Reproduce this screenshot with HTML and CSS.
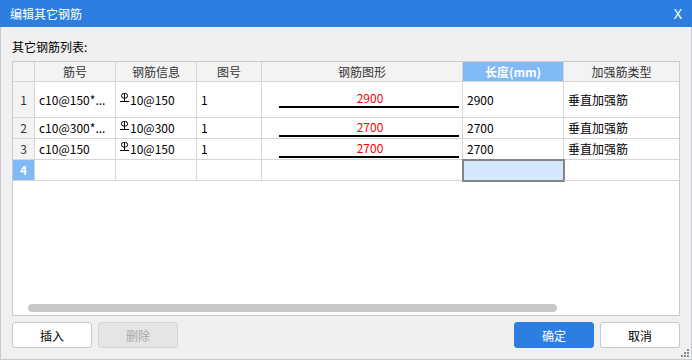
FILE: index.html
```html
<!DOCTYPE html>
<html lang="zh-CN">
<head>
    <meta charset="UTF-8">
    <title>编辑其它钢筋</title>
    <link rel="stylesheet" href="styles.css">
</head>
<body>
    <div class="window">
        <div class="titlebar">
            <span class="title">编辑其它钢筋</span>
            <span class="close">X</span>
        </div>
        <div class="content">
            <div class="caption">其它钢筋列表:</div>
            <div class="grid-box">
                <div class="grid">
                    <!-- header -->
                    <div class="cell hd"></div>
                    <div class="cell hd">筋号</div>
                    <div class="cell hd">钢筋信息</div>
                    <div class="cell hd">图号</div>
                    <div class="cell hd">钢筋图形</div>
                    <div class="cell hd active">长度(mm)</div>
                    <div class="cell hd">加强筋类型</div>

                    <!-- row 1 -->
                    <div class="cell rh">1</div>
                    <div class="cell">c10@150*...</div>
                    <div class="cell"><svg class="grade" viewBox="0 0 9 9"><rect x="1.5" y="0.5" width="6" height="4.5" rx="2"/><line x1="4.5" y1="0" x2="4.5" y2="8.5"/><line x1="0" y1="8.5" x2="9" y2="8.5"/></svg>10@150</div>
                    <div class="cell">1</div>
                    <div class="cell shape"><div class="sketch"><span class="dim">2900</span><span class="bar"></span></div></div>
                    <div class="cell">2900</div>
                    <div class="cell">垂直加强筋</div>

                    <!-- row 2 -->
                    <div class="cell rh">2</div>
                    <div class="cell">c10@300*...</div>
                    <div class="cell"><svg class="grade" viewBox="0 0 9 9"><rect x="1.5" y="0.5" width="6" height="4.5" rx="2"/><line x1="4.5" y1="0" x2="4.5" y2="8.5"/><line x1="0" y1="8.5" x2="9" y2="8.5"/></svg>10@300</div>
                    <div class="cell">1</div>
                    <div class="cell shape"><div class="sketch"><span class="dim">2700</span><span class="bar"></span></div></div>
                    <div class="cell">2700</div>
                    <div class="cell">垂直加强筋</div>

                    <!-- row 3 -->
                    <div class="cell rh">3</div>
                    <div class="cell">c10@150</div>
                    <div class="cell"><svg class="grade" viewBox="0 0 9 9"><rect x="1.5" y="0.5" width="6" height="4.5" rx="2"/><line x1="4.5" y1="0" x2="4.5" y2="8.5"/><line x1="0" y1="8.5" x2="9" y2="8.5"/></svg>10@150</div>
                    <div class="cell">1</div>
                    <div class="cell shape"><div class="sketch"><span class="dim">2700</span><span class="bar"></span></div></div>
                    <div class="cell">2700</div>
                    <div class="cell">垂直加强筋</div>

                    <!-- new row -->
                    <div class="cell rh active">4</div>
                    <div class="cell"></div>
                    <div class="cell"></div>
                    <div class="cell"></div>
                    <div class="cell"></div>
                    <div class="cell selected"></div>
                    <div class="cell"></div>
                </div>
                <div class="hscroll"><div class="thumb"></div></div>
            </div>
            <div class="actions">
                <button class="btn">插入</button>
                <button class="btn" disabled>删除</button>
                <span class="spacer"></span>
                <button class="btn primary">确定</button>
                <button class="btn">取消</button>
            </div>
        </div>
        <svg class="grip" viewBox="0 0 8 8">
            <rect x="6" y="0" width="2" height="2"/>
            <rect x="3" y="3" width="2" height="2"/>
            <rect x="6" y="3" width="2" height="2"/>
            <rect x="0" y="6" width="2" height="2"/>
            <rect x="3" y="6" width="2" height="2"/>
            <rect x="6" y="6" width="2" height="2"/>
        </svg>
    </div>
</body>
</html>
```

FILE: styles.css
```css
/* dialog frame */
html, body {
    margin: 0;
    padding: 0;
}
body {
    width: 692px;
    height: 360px;
    overflow: hidden;
    font-family: "Noto Sans CJK SC", sans-serif;
    font-size: 12px;
    color: #000;
    background: #f0f0f0;
}
.window {
    position: relative;
    height: 360px;
    display: flex;
    flex-direction: column;
}
.titlebar {
    height: 27px;
    flex: none;
    background: #2c7fe0;
    color: #fff;
    display: flex;
    align-items: center;
    justify-content: space-between;
    padding: 0 10px 0 10px;
}
.title {
    line-height: 17px;
}
.close {
    font-family: "Noto Sans", sans-serif;
    font-size: 14px;
    line-height: 17px;
}
.content {
    flex: 1;
    border: 1px solid #c5cad1;
    border-top: none;
    padding: 11px 11px 0;
}
.caption {
    line-height: 17px;
    margin-bottom: 6px;
}

/* grid */
.grid-box {
    height: 255px;
    box-sizing: border-box;
    border: 1px solid #cbcbcb;
    background: #fff;
    display: flex;
    flex-direction: column;
}
.grid {
    display: grid;
    grid-template-columns: 22px 81px 81px 65px 201px 101px 115px;
    grid-template-rows: 20px 36px 21px 21px 21px;
}
.cell {
    box-sizing: border-box;
    border-right: 1px solid #d6d6d6;
    border-bottom: 1px solid #d6d6d6;
    display: flex;
    align-items: center;
    padding-left: 4px;
    white-space: nowrap;
    overflow: hidden;
    line-height: 16px;
}
.cell:nth-child(7n) {
    border-right: none;
}
.hd, .rh {
    background: #f3f3f3;
    color: #333;
    justify-content: center;
    padding-left: 0;
}
.hd.active, .rh.active {
    background: #80b9f5;
    color: #fff;
    font-weight: bold;
}
.selected {
    background: #d5e7fc;
    outline: 2px solid #858585;
    outline-offset: -1px;
}
.grade {
    width: 9px;
    height: 9px;
    margin: -5px 1px 0 0;
    fill: none;
    stroke: #000;
    stroke-width: 1;
}

/* rebar sketch */
.shape {
    padding: 0 3px 0 17px;
}
.sketch {
    flex: 1;
    display: flex;
    flex-direction: column;
    align-items: center;
}
.dim {
    color: #f00;
    font-size: 12px;
    line-height: 14px;
    padding-left: 2px;
}
.bar {
    align-self: stretch;
    height: 2px;
    margin-top: 1px;
    background: #000;
}

/* scrollbar */
.hscroll {
    margin-top: auto;
    padding: 0 0 3px 15px;
}
.thumb {
    width: 529px;
    height: 8px;
    border-radius: 4px;
    background: #c8c8c8;
}

/* buttons */
.actions {
    display: flex;
    gap: 6px;
    margin-top: 6px;
}
.spacer {
    flex: 1;
}
.btn {
    width: 80px;
    height: 26px;
    border: 1px solid #c9c9c9;
    border-radius: 3px;
    background: #fff;
    font-family: inherit;
    font-size: 12px;
    color: #000;
    padding: 0;
}
.btn:disabled {
    background: #e5e5e5;
    border-color: #d4d4d4;
    color: #a8a8a8;
}
.btn.primary {
    background: #2c7fe0;
    border-color: #2c7fe0;
    color: #fff;
}
.grip {
    position: absolute;
    right: 3px;
    bottom: 3px;
    width: 8px;
    height: 8px;
    fill: #8a8a8a;
}
```
